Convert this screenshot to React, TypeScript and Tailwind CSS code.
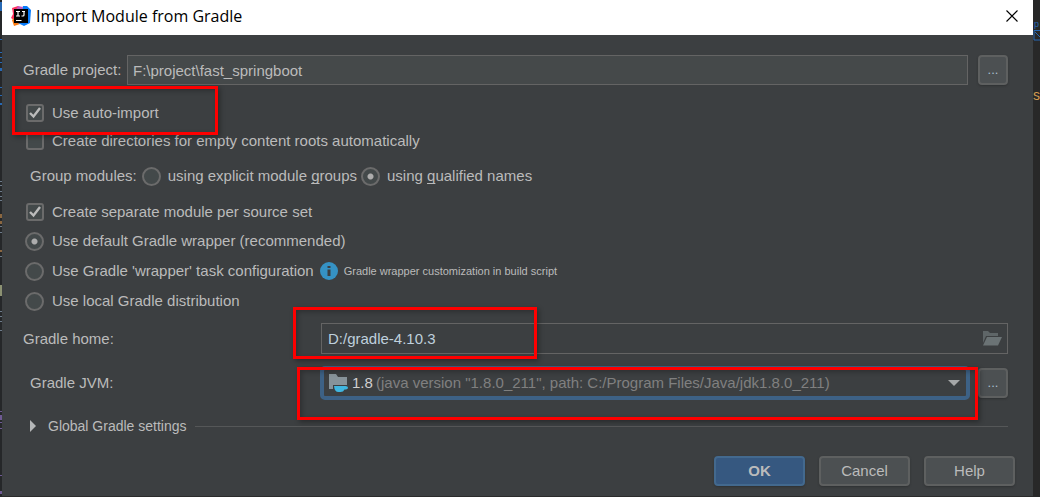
import React, { useState } from 'react';

const check =
  'appearance-none size-[18px] shrink-0 rounded-[3px] border-2 border-[#6b6b6b] bg-[#43494a] checked:bg-[url("data:image/svg+xml,%3Csvg%20xmlns=%27http://www.w3.org/2000/svg%27%20viewBox=%270%200%2014%2014%27%3E%3Cpath%20d=%27M2%207L5.500%2010.500L12%202%27%20fill=%27none%27%20stroke=%27%23bbbbbb%27%20stroke-width=%272.4%27/%3E%3C/svg%3E")]';
const radio =
  'appearance-none size-[19px] shrink-0 rounded-full border-2 border-[#6b6b6b] bg-[#43494a] checked:bg-[radial-gradient(circle,#adadad_2.5px,transparent_3.5px)]';
const button =
  'h-[30px] w-[91px] rounded-[4px] border-2 text-[15px] leading-4 shadow-[0_1px_2px_#2f3233]';
const dots =
  'h-[30px] w-[30px] shrink-0 rounded-[4px] border-2 border-[#5e6060] bg-[#4c5052] text-[13px] leading-5 text-[#a9bfcf] shadow-[0_1px_2px_#2f3233]';
const mark =
  'pointer-events-none absolute z-10 border-3 border-[#fe0000] shadow-[2px_2px_5px_#00000055,inset_2px_2px_5px_#00000040]';
const underline = 'underline [text-decoration-skip-ink:none] underline-offset-2';

function Logo() {
  return (
    <svg className="size-5 shrink-0" viewBox="0 0 20 20" aria-hidden="true">
      <path d="M1 2 7 0 12 3 8 12 3 14 0 12 2 8z" fill="#fe315d" />
      <path d="M1 14 5 10 9 18 3 20z" fill="#f97a12" />
      <path d="M12 0h4l4 4-1 13-6 3-6-3z" fill="#087cfa" />
      <path d="M7 0l5 1-1 3H5z" fill="#c757bc" />
      <rect x="3" y="3" width="14" height="14" fill="#000" />
      <path d="M5 5.500h4M7 5.500v4.500M5 10h4M11 5.500h3M13 5.500v3.500q0 1-1 1h-1.500M5 14.500h5.500" fill="none" stroke="#fff" strokeWidth="1.200" />
    </svg>
  );
}

export default function App() {
  const [layout, setLayout] = useState('qualified');
  const [source, setSource] = useState('default');
  return (
    <div className="flex min-h-screen overflow-hidden bg-[#2b2b2b] font-['Liberation_Sans',sans-serif] text-[15px] leading-5 text-[#bbbbbb]">
      <div className="w-[2px] shrink-0 bg-[#252729]">
        <svg className="h-[497px] w-[2px]" viewBox="0 0 2 497" fill="none" strokeWidth="2" aria-hidden="true">
          <path d="M1 2v9M1 39v1M1 52v1M1 57v1M1 62v1M1 68v3M1 87v1M1 95v1M1 103v2" stroke="#2769b5" />
          <path d="M1 181v1M1 185v1M1 191v1M1 196v1M1 200v1M1 226v1M1 232v1M1 251v1M1 256v1M1 311v1M1 316v1M1 321v1M1 330v1" stroke="#6d7b8a" />
          <path d="M1 285v11" stroke="#8c9172" />
          <path d="M1 214v4M1 221v3M1 250v2" stroke="#8b6740" />
          <path d="M1 411v1M1 415v5M1 422v1M1 428v1M1 475v1M1 491v3" stroke="#6e5a93" />
        </svg>
      </div>
      <main className="flex min-w-0 grow flex-col border-b border-[#2b2b2b] bg-[#3c3f41]">
        <header className="flex h-[35px] shrink-0 items-center bg-white pr-[14px] pb-[3px] pl-[9px] text-black">
          <Logo />
          <h1 className="ml-[5px] grow font-['Open_Sans',sans-serif] text-[16px] leading-5">Import Module from Gradle</h1>
          <button type="button" aria-label="Close" className="p-px">
            <svg className="size-3" viewBox="0 0 12 12" aria-hidden="true">
              <path d="M.5.5l11 11M11.5.5l-11 11" stroke="#000" strokeWidth="1.1" />
            </svg>
          </button>
        </header>
        <form className="flex grow flex-col pt-5 pr-[25px] pb-[10px] pl-[21px]" onSubmit={(e) => e.preventDefault()}>
          <div className="flex items-center">
            <label htmlFor="project" className="w-[104px] shrink-0">Gradle project:</label>
            <input id="project" defaultValue="F:\project\fast_springboot" className="h-[30px] min-w-0 grow border border-[#646464] bg-[#45494a] px-[5px]" />
            <button type="button" className={`ml-[10px] ${dots}`} aria-label="Browse project">...</button>
          </div>
          <div className="relative mt-[18px] flex">
            <label className="flex items-center gap-2 pl-[3px]"><input type="checkbox" defaultChecked className={check} />Use auto-import</label>
            <div className={`-top-[17px] -left-[11px] h-[49px] w-[206px] ${mark}`} />
          </div>
          <label className="mt-2 flex items-center gap-2 pl-[3px]"><input type="checkbox" className={check} />Create directories for empty content roots automatically</label>
          <fieldset className="mt-[15px] flex items-center pl-[7px]">
            <legend className="float-left mr-[5px]">Group modules:</legend>
            <label className="flex items-center gap-[7px]">
              <input type="radio" name="layout" checked={layout === 'explicit'} onChange={() => setLayout('explicit')} className={radio} />
              <span>using explicit module <span className={underline}>g</span>roups</span>
            </label>
            <label className="ml-1 flex items-center gap-[7px]">
              <input type="radio" name="layout" checked={layout === 'qualified'} onChange={() => setLayout('qualified')} className={radio} />
              <span>using <span className={underline}>q</span>ualified names</span>
            </label>
          </fieldset>
          <label className="mt-4 flex items-center gap-2 pl-[3px]"><input type="checkbox" defaultChecked className={check} />Create separate module per source set</label>
          <div className="mt-[9px] flex flex-col gap-[10px] pl-[2px]">
            <label className="flex items-center gap-2"><input type="radio" name="source" checked={source === 'default'} onChange={() => setSource('default')} className={radio} />Use default Gradle wrapper (recommended)</label>
            <div className="flex items-center">
              <label className="flex items-center gap-2"><input type="radio" name="source" checked={source === 'task'} onChange={() => setSource('task')} className={radio} />Use Gradle 'wrapper' task configuration</label>
              <svg className="ml-[6px] size-[18px]" viewBox="0 0 18 18" aria-hidden="true">
                <circle cx="9" cy="9" r="9" fill="#3592c4" />
                <path d="M7.500 4h3v2h-3zM7.500 7.500h3V14h-3z" fill="#3c3f41" />
              </svg>
              <span className="ml-[6px] text-[11px]">Gradle wrapper customization in build script</span>
            </div>
            <label className="flex items-center gap-2"><input type="radio" name="source" checked={source === 'local'} onChange={() => setSource('local')} className={radio} />Use local Gradle distribution</label>
          </div>
          <div className="relative mt-3 flex items-center">
            <label htmlFor="home" className="w-[298px] shrink-0">Gradle home:</label>
            <div className="flex h-[31px] min-w-0 grow items-center border border-[#646464] pr-[5px]">
              <input id="home" defaultValue="D:/gradle-4.10.3" className="min-w-0 grow bg-transparent px-[6px] text-[#bfd0dd]" />
              <svg className="h-[15px] w-5" viewBox="0 0 20 15" aria-hidden="true">
                <path d="M1 0h5l2 2h8v3H4l-3 7z" fill="#5f6668" />
                <path d="M5 6h15l-4 8.500H1z" fill="#6b7375" />
              </svg>
            </div>
            <div className={`-top-4 left-[270px] h-[52px] w-[244px] ${mark}`} />
          </div>
          <div className="relative mt-3 flex items-center">
            <label htmlFor="jvm" className="w-[297px] shrink-0 pl-[7px]">Gradle JVM:</label>
            <div className="relative flex h-[34px] min-w-0 grow items-center rounded-[5px] border-4 border-[#3d6185]">
              <select id="jvm" className="h-full w-full appearance-none bg-transparent pl-[28px] text-[#d0d0d0] outline-none">
                <option>1.8</option>
              </select>
              <div className="pointer-events-none absolute inset-0 flex items-center pr-[6px] pl-[5px]">
                <svg className="h-[18px] w-5 shrink-0" viewBox="0 0 20 18" aria-hidden="true">
                  <path d="M0 0h7l2 3h9v8H4v4H0z" fill="#87939a" />
                  <path d="M5 12h11.500q2.500 0 2.500 1.700t-3.500 1.800q-1 2.500-4 2.500h-2q-4 0-4.500-6z" fill="#40b6e0" />
                </svg>
                <span className="ml-[27px] grow truncate text-[#808080]">(java version "1.8.0_211", path: C:/Program Files/Java/jdk1.8.0_211)</span>
                <svg className="h-[6px] w-3 shrink-0" viewBox="0 0 12 6" aria-hidden="true"><path d="M0 0h12L6 6z" fill="#a5a7a8" /></svg>
              </div>
            </div>
            <button type="button" className={`ml-2 ${dots}`} aria-label="Browse JVM">...</button>
            <div className={`top-px right-[30px] left-[274px] h-[53px] ${mark}`} />
          </div>
          <div className="mt-4 flex items-center">
            <button type="button" className="flex items-center pl-[7px] text-[14px]">
              <svg className="mr-3 h-3 w-[6px]" viewBox="0 0 6 12" aria-hidden="true"><path d="M0 0l6 6-6 6z" fill="#b5b7b8" /></svg>
              Global Gradle settings
            </button>
            <div className="ml-2 h-px grow bg-[#555758]" />
          </div>
          <div className="-mr-[7px] mt-auto flex justify-end gap-[14px]">
            <button type="submit" className={`border-[#43698e] bg-[#365880] font-bold ${button}`}>OK</button>
            <button type="button" className={`border-[#5e6060] bg-[#4c5052] ${button}`}>Cancel</button>
            <button type="button" className={`border-[#5e6060] bg-[#4c5052] ${button}`}>Help</button>
          </div>
        </form>
      </main>
      <aside className="flex w-[7px] shrink-0 flex-col items-center bg-[#282828] pt-[18px]">
        <span className="text-[9px] leading-3 text-[#2769b5]">p</span>
        <svg className="h-[11px] w-[7px]" viewBox="0 0 7 11" fill="none" stroke="#2769b5" aria-hidden="true">
          <path d="M7 .5H1v9.500h6M2 2l5 5" />
        </svg>
        <span className="mt-[44px] text-[14px] leading-5 text-[#d09a50]">s</span>
      </aside>
    </div>
  );
}
